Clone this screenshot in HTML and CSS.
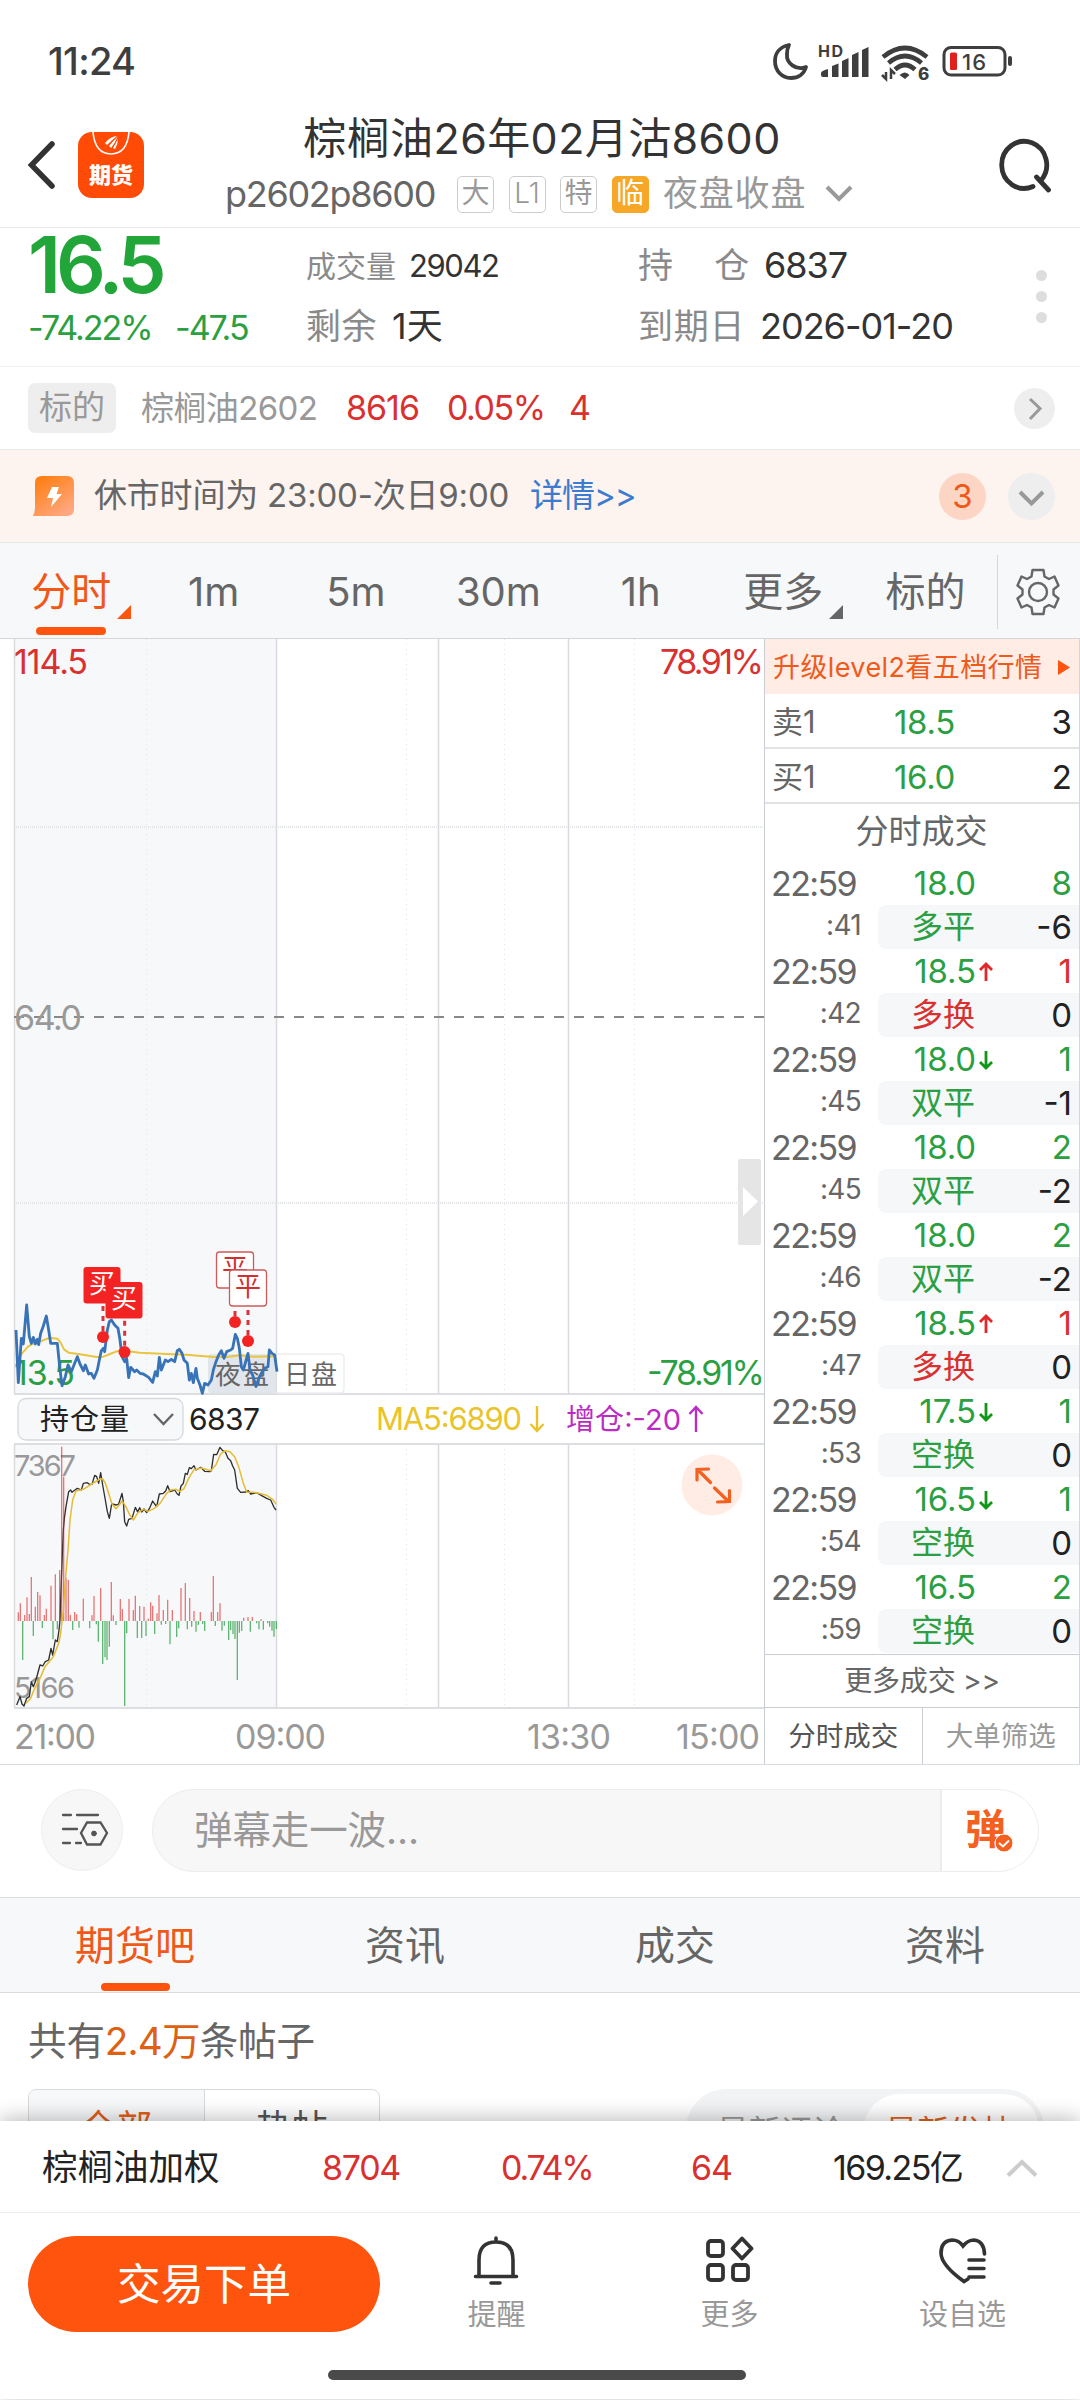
FILE: index.html
```html
<!DOCTYPE html>
<html lang="zh-CN">
<head>
<meta charset="utf-8">
<title>棕榈油26年02月沽8600</title>
<link rel="stylesheet" href="styles.css">
</head>
<body>
<div class="screen">
  <div class="statusbar">
    <span class="clock">11:24</span>
    <svg class="status-icons" width="246" height="44" viewBox="770 40 246 44">
      <path d="M789 45C779 47 775 54 775 61C775 71 782 78 791 78C798 78 804 74 806 67C796 71 786 63 787 54C787 50 788 47 789 45Z" fill="none" stroke="#3e3e3e" stroke-width="3.8" stroke-linejoin="round"/>
      <text x="818" y="57" font-size="16" font-weight="700" textLength="25" fill="#3e3e3e">HD</text>
      <path d="M821 73Q821 71 828 69V77H823Q821 77 821 75ZM832 66L838.5 63.500V77H832ZM842 61L848.500 58V77H842ZM852 55L858.500 52V77H852ZM862 50L868.500 47V77H862Z" fill="#3e3e3e"/>
      <g fill="none" stroke="#3e3e3e" stroke-width="4.600">
        <path d="M883 57Q905 39 927 57"/><path d="M888.500 63Q905 49 921.500 63"/><path d="M895 69.500Q905 60.500 915 69.500"/>
      </g>
      <path d="M899.500 75Q905 70 909.500 75L905 79Z" fill="#3e3e3e"/>
      <path d="M886 72V79L882 75M891 79V70L895 74" fill="none" stroke="#3e3e3e" stroke-width="2.500"/>
      <text x="918" y="80" font-size="17" font-weight="800" fill="#3e3e3e">6</text>
      <rect x="944" y="47.500" width="61" height="27.500" rx="7" fill="#fff" stroke="#3e3e3e" stroke-width="3"/>
      <rect x="1008" y="56" width="4" height="10" rx="2" fill="#3e3e3e"/>
      <rect x="950" y="52.500" width="7" height="17.500" rx="1.500" fill="#e01f1f"/>
      <text x="962" y="70" font-size="22" font-weight="500" textLength="24" fill="#3e3e3e">16</text>
    </svg>
  </div>

  <header class="header">
    <svg class="back" width="30" height="50" viewBox="0 0 30 50"><path d="M26 4L5.500 25L26 46" fill="none" stroke="#333" stroke-width="5.500" stroke-linecap="round" stroke-linejoin="miter"/></svg>
    <div class="logo">
      <svg width="66" height="26" viewBox="0 0 66 26"><path d="M15 0Q17 22 33 22Q49 22 51 0" fill="none" stroke="#fff" stroke-width="1.600"/><path d="M27 11Q33 4 39 4Q34 8 29 13ZM31 14Q36 8 39.500 5Q37 11 33 16ZM35 16Q38 11 40 7Q40 12 37 17Z" fill="#fff"/></svg>
      <span>期货</span>
    </div>
    <div class="title-block">
      <h1>棕榈油26年02月沽8600</h1>
      <div class="subtitle">
        <span class="code">p2602p8600</span>
        <span class="tag">大</span><span class="tag tag-l1">L1</span><span class="tag">特</span><span class="tag tag-hot">临</span>
        <span class="session">夜盘收盘</span>
        <svg width="28" height="18" viewBox="0 0 28 18"><path d="M2 2L14 14L26 2" fill="none" stroke="#999" stroke-width="4"/></svg>
      </div>
    </div>
    <svg class="search" width="56" height="56" viewBox="0 0 56 56"><path d="M35 48.500A22.500 23.500 0 1 1 43 42.500M38.500 39L50.500 52" fill="none" stroke="#333" stroke-width="4.800" stroke-linecap="round"/></svg>
  </header>

  <section class="quote">
    <div class="quote-price">
      <strong>16.5</strong>
      <div class="chg"><span>-74.22%</span><span>-47.5</span></div>
    </div>
    <div class="quote-col c1">
      <div class="sm"><i>成交量</i><b>29042</b></div>
      <div><i>剩余</i><b>1天</b></div>
    </div>
    <div class="quote-col c2">
      <div><i class="spread"><u>持</u><u>仓</u></i><b>6837</b></div>
      <div><i>到期日</i><b>2026-01-20</b></div>
    </div>
    <div class="dots"><s></s><s></s><s></s></div>
  </section>

  <section class="underlying">
    <span class="chip">标的</span>
    <span class="u-name">棕榈油2602</span>
    <span class="u-price">8616</span><span class="u-pct">0.05%</span><span class="u-diff">4</span>
    <svg class="push" width="41" height="41" viewBox="0 0 41 41"><circle cx="20.500" cy="20.500" r="20.500" fill="#eee"/><path d="M16 11L26 20.500L16 31" fill="none" stroke="#999" stroke-width="3"/></svg>
  </section>

  <section class="notice">
    <svg width="42" height="40" viewBox="0 0 42 40"><defs><linearGradient id="nt" x1="0" y1="0" x2=".7" y2="1"><stop offset="0" stop-color="#ff7a05"/><stop offset="1" stop-color="#ffa780"/></linearGradient></defs><path d="M2 7Q2 0 9 0H34Q41 0 41 7V33Q41 40 34 40H0Q2 36 2 32Z" fill="url(#nt)"/><path d="M19 11H26L23.500 18H29L18 31L20 22H14Z" fill="#fff"/></svg>
    <span class="n-text">休市时间为 23:00-次日9:00</span>
    <span class="n-link">详情&gt;&gt;</span>
    <span class="n-count">3</span>
    <svg width="47" height="47" viewBox="0 0 47 47"><circle cx="23.500" cy="23.500" r="23.500" fill="#eee"/><path d="M12 19L23.500 30.500L35 19" fill="none" stroke="#999" stroke-width="4"/></svg>
  </section>

  <nav class="periods">
    <span class="p on">分时<em></em></span>
    <span class="p">1m</span>
    <span class="p">5m</span>
    <span class="p">30m</span>
    <span class="p">1h</span>
    <span class="p">更多<em></em></span>
    <span class="p">标的</span>
    <span class="gear"><svg width="44" height="48" viewBox="-22 -24 44 48"><path d="M-5.500 -22H5.500L6.500 -15.500L11 -13L16.500 -15.500L20.500 -6.500L15.500 -2.500V2.500L20.500 6.500L16.500 15.500L11 13L6.500 15.500L5.500 22H-5.500L-6.500 15.500L-11 13L-16.500 15.500L-20.500 6.500L-15.500 2.500V-2.500L-20.500 -6.500L-16.500 -15.500L-11 -13L-6.500 -15.500Z" fill="none" stroke="#666" stroke-width="2.400" stroke-linejoin="round"/><circle r="9" fill="none" stroke="#666" stroke-width="2.400"/></svg></span>
  </nav>

  <main class="market">
    <svg class="chart" width="764" height="1125" viewBox="0 639 764 1125">
      <rect x="14" y="639" width="263" height="755" fill="#f7f8fa"/>
      <rect x="14" y="1444" width="263" height="264" fill="#f7f8fa"/>
      <g stroke="#e2e3e6" stroke-width="1" stroke-dasharray="1 4">
        <path d="M146.500 639V1394M406.500 639V1394M504.500 639V1394M634.500 639V1394M146.500 1444V1708M406.500 1444V1708M504.500 1444V1708M634.500 1444V1708"/>
      </g>
      <path d="M14 827H763M14 1203H763" stroke="#e4e5e8" stroke-width="2" stroke-dasharray="1 1"/>
      <path d="M14.500 639V1394M14.500 1444V1708M276.500 639V1394M276.500 1444V1708M438.500 639V1394M438.500 1444V1708M568.500 639V1394M568.500 1444V1708" stroke="#d9dadd" stroke-width="1.500" fill="none"/>
      <path d="M14 1394H764M14 1444H764M14 1708H764" stroke="#dcdee1" stroke-width="2"/>
      <path d="M14 1017H764" stroke="#888" stroke-width="2" stroke-dasharray="10 10"/>

      <rect x="208" y="1354" width="68" height="39" rx="3" fill="#e1e5ec"/>
      <path d="M277 1354H340Q344 1354 344 1358V1389Q344 1393 340 1393H277" fill="#fff" stroke="#eceef0" stroke-width="1.500"/>
      <g font-size="26" fill="#666"><text x="215" y="1384" textLength="54">夜盘</text><text x="284" y="1384" textLength="53">日盘</text></g>
      <g font-size="34">
        <text x="14" y="674" textLength="74" fill="#d93030">114.5</text>
        <text x="660" y="674" textLength="104" fill="#d93030">78.91%</text>
        <text x="14" y="1030" textLength="68" fill="#999">64.0</text>
        <text x="14" y="1385" textLength="61" fill="#2c9f43">13.5</text>
        <text x="647" y="1385" textLength="118" fill="#2c9f43">-78.91%</text>
      </g>

      <g transform="translate(0 1220) scale(.33333)" fill="none" stroke-linejoin="round">
        <path stroke="#e9c53f" stroke-width="6" d="M55 420L66 400L84 380L104 368L124 363L150 353L172 356L182 368L192 388L206 398L240 403L290 411L310 410L330 402L350 394L372 392L420 398L500 402L560 404L640 411L680 411L720 406L760 410L828 409"/>
        <path stroke="#3873b8" stroke-width="8.500" d="M48 330L55 488L64 355L70 372L80 255L88 350L94 370L100 352L106 372L112 358L116 374L122 340L130 318L139 288L146 330L152 370H172L178 430L186 497L196 470L204 435L214 455L224 430L232 410L240 432L250 452L256 435L266 462L274 460L282 475L292 450L298 420L304 392L310 385L314 395L322 330L328 305L334 300L344 315L354 325L360 360L366 410L374 425L380 415L386 473L392 442L404 455L410 450L420 460L430 462L446 472L458 487L466 455L472 468L478 412L484 450L496 420L504 425L514 418L524 425L532 392L538 388L546 400L552 420L562 430L568 480L574 460L580 488L588 445L592 475L600 495L607 520L614 490L624 495L634 480L640 450L648 425L656 405L664 392L672 415L680 395L692 390L698 385L706 343L712 355L718 385L724 440L730 450L744 400L750 450L758 465L768 500L776 475L784 460L794 445L804 440L808 390L816 400L824 405L831 455"/>
        <path stroke="#d8323a" stroke-width="9" stroke-dasharray="15 15" d="M309 258V340M374 302V385M705 273V300M744 270V350"/>
      </g>
      <g fill="#f42323">
        <circle cx="103" cy="1337" r="6"/><circle cx="124.500" cy="1352" r="6"/><circle cx="235" cy="1322" r="6"/><circle cx="248" cy="1341" r="6"/>
        <rect x="83.500" y="1267" width="37" height="36.500" rx="3"/>
        <text x="89" y="1293" font-size="26" fill="#fff">买</text>
        <rect x="105.500" y="1282" width="37" height="36.500" rx="3"/>
        <text x="111" y="1308" font-size="26" fill="#fff">买</text>
        <g fill="#fff" stroke="#cf5a5a" stroke-width="1.300"><rect x="216.500" y="1252" width="37" height="36" rx="3"/></g>
        <text x="222" y="1278" font-size="26" fill="#cf3030">平</text>
        <g fill="#fff" stroke="#cf5a5a" stroke-width="1.300"><rect x="229.500" y="1270" width="37" height="36" rx="3"/></g>
        <text x="235" y="1296" font-size="26" fill="#cf3030">平</text>
      </g>

      <rect x="738" y="1159" width="23" height="86" rx="2" fill="#e5e5e5"/><path d="M743 1187V1216L758 1201.500Z" fill="#fff"/>

      <rect x="18" y="1398.500" width="165" height="41.500" rx="8" fill="#f7f8fa" stroke="#d5d8dd" stroke-width="1.300"/>
      <text x="40" y="1430" font-size="29" textLength="89" fill="#222">持仓量</text>
      <path d="M154 1414L163.500 1424L173 1414" fill="none" stroke="#666" stroke-width="2.400"/>
      <text x="189" y="1430" font-size="30" textLength="71" fill="#222">6837</text>
      <text x="376" y="1430" font-size="31" textLength="146" fill="#eac32a">MA5:6890</text>
      <path d="M537 1406V1431M530.500 1424L537 1431L543.500 1424" fill="none" stroke="#eac32a" stroke-width="2.400"/>
      <text x="566" y="1430" font-size="29" textLength="115" fill="#bb2cc3">增仓:-20</text>
      <path d="M696 1432V1407M689.500 1414L696 1407L702.500 1414" fill="none" stroke="#bb2cc3" stroke-width="2.400"/>

      <g font-size="29" fill="#999"><text x="14" y="1476" textLength="62">7367</text><text x="14" y="1698" textLength="61">5166</text></g>
      <g transform="translate(0 1430) scale(.33333)" fill="none">
        <path stroke="#2e2e2e" stroke-width="4" stroke-linejoin="round" d="M50 825L60 800L66 822L72 828L80 805L88 800L94 755L100 770L106 755L112 735L120 705L128 708L136 695L146 690L153 655L158 675L166 630L172 635L177 600L180 570L184 450L190 300L193 265L198 230L206 185L212 180L216 187L232 175L244 180L250 160L262 158L268 163H276L284 136L290 140L296 160L302 128L308 165L316 210L322 245L328 265L335 222L350 225L356 222L366 190L370 215L374 275L380 288L386 268L396 265L406 232L413 246L419 233L425 246L432 237L440 248L448 236L458 213L464 222L470 230L478 192L490 190L497 183L503 167L510 185L524 180L532 192L537 196L543 168L550 160L556 130L562 133L568 113L574 116L582 107L588 120L602 112L614 124L630 125L634 122L641 73L650 74L660 52L668 62L676 66L684 85L692 92L698 108L704 120L712 175L722 187L738 186L745 182L752 192L770 188L785 197L800 205L812 210L822 232L828 240"/>
        <path stroke="#d22" stroke-opacity=".6" stroke-width="4" d="M55 573V547M61 573V520M74 573V555M81 573V502M88 573V552M94 573V441M106 573V530M113 573V486M120 573V496M133 573V555M139 573V536M153 573V467M166 573V433M179 573V420M185 573V50M191 573V140M198 573V444M205 573V450M211 573V555M224 573V546M230 573V553M250 573V506M276 573V556M282 573V498M302 573V474M334 573V456M340 573V556M361 573V507M367 573V537M387 573V507M400 573V540M406 573V497M419 573V528M432 573V530M445 573V566M452 573V517M458 573V527M471 573V550M477 573V495M490 573V540M503 573V509M517 573V540M543 573V474M556 573V459M569 573V504M582 573V543M601 573V546M634 573V546M640 573V438M653 573V546M660 573V520M731 573V563M744 573V561M757 573V561M783 573V568"/>
        <path stroke="#1f9a3a" stroke-opacity=".7" stroke-width="4" d="M68 573V690M100 573V618M127 573V594M159 573V628M172 573V598M218 573V600M237 573V593M269 573V595M289 573V583M295 573V635M308 573V702M315 573V682M321 573V690M328 573V650M348 573V585M374 573V828M380 573V610M412 573V624M425 573V624M438 573V618M464 573V612M484 573V584M497 573V582M510 573V643M530 573V621M536 573V595M562 573V598M575 573V590M588 573V605M595 573V585M608 573V582M614 573V603M646 573V588M666 573V602M673 573V587M686 573V630M692 573V600M699 573V612M705 573V627M712 573V750M718 573V608M725 573V603M751 573V605M770 573V580M777 573V598M790 573V599M803 573V580M809 573V590M816 573V602M822 573V620M829 573V597"/>
        <path stroke="#e6bb33" stroke-width="4.500" stroke-linejoin="round" d="M78 820L92 805L104 775L120 745L135 710L160 680L176 640L182 610L190 540L196 450L204 360L210 270L218 210L228 183L250 178L275 162L300 147L308 146L316 160L326 190L336 222L348 236L358 225L366 213L376 227L388 252L400 270L414 248L430 238L444 244L462 236L480 220L500 190L512 180L528 178L540 184L552 176L566 145L582 119L604 114L632 122L648 104L662 72L676 62L690 65L704 80L716 110L730 160L740 186L770 188L800 196L818 208L828 222"/>
      </g>
      <circle cx="712" cy="1485" r="30.500" fill="#ffece5"/>
      <path d="M710.500 1482.500L698 1470M697 1480V1469.500L708.500 1469M714.500 1488L728 1501M729.500 1490.500V1501.500L717.500 1502" fill="none" stroke="#f4601f" stroke-width="3.200" stroke-linecap="round"/>
      <g font-size="34" fill="#999"><text x="14" y="1749" textLength="82">21:00</text><text x="235" y="1749" textLength="91">09:00</text><text x="527" y="1749" textLength="84">13:30</text><text x="676" y="1749" textLength="84">15:00</text></g>
    </svg>

    <aside class="book">
      <div class="level2"><span>升级level2看五档行情</span><svg width="12" height="15" viewBox="0 0 12 15"><path d="M0 0V15L12 7.500Z" fill="#ff5310"/></svg></div>
      <div class="depth"><i>卖1</i><span class="g">18.5</span><b>3</b></div>
      <div class="depth"><i>买1</i><span class="g">16.0</span><b>2</b></div>
      <div class="book-title">分时成交</div>
      <div class="ticks" id="ticks"></div>
      <div class="more">更多成交 &gt;&gt;</div>
      <div class="book-tabs"><span>分时成交</span><span>大单筛选</span></div>
    </aside>
  </main>

  <section class="danmu">
    <div class="dm-set"><svg width="48" height="36" viewBox="0 0 48 36" fill="none" stroke="#555" stroke-width="2.300" stroke-linecap="round"><path d="M2 3H10M16 3H37M2 17H16M2 31H9M15 31H20M20 21L26 10.500H39.500L46 21L39.500 32.500H26Z"/><circle cx="33" cy="21.500" r="2.400" fill="#555" stroke-width="1"/></svg></div>
    <div class="dm-box"><span class="dm-ph">弹幕走一波...</span><span class="dm-btn">弹<svg width="20" height="20" viewBox="0 0 20 20"><circle cx="10" cy="10" r="9" fill="#f4601f" stroke="#fff"/><path d="M5 10L9 13.500L15 7.500" fill="none" stroke="#fff" stroke-width="2"/></svg></span></div>
  </section>

  <nav class="info-tabs"><span class="on">期货吧</span><span>资讯</span><span>成交</span><span>资料</span></nav>

  <section class="posts">
    <div class="count">共有<b>2.4万</b>条帖子</div>
    <div class="filters">
      <div class="seg"><span class="on">全部</span><span>热帖</span></div>
      <div class="sort"><span>最新评论</span><span class="on">最新发帖</span></div>
    </div>
  </section>

  <footer class="bottom">
    <div class="index-row"><span class="ix-name">棕榈油加权</span><span class="r ix-p">8704</span><span class="r ix-c">0.74%</span><span class="r ix-d">64</span><span class="ix-v">169.25亿</span><svg width="32" height="20" viewBox="0 0 32 20"><path d="M2 17.500L16 4L30 17.500" fill="none" stroke="#ccc" stroke-width="4"/></svg></div>
    <div class="actions">
      <button class="trade">交易下单</button>
      <div class="act"><svg width="48" height="50" viewBox="0 0 48 50" fill="none" stroke="#333" stroke-width="3.600" stroke-linecap="round"><path d="M24 2V5M7 40V24Q7 6 24 6Q41 6 41 24V40M3.500 40.500H44.500M19 47H28"/></svg><span>提醒</span></div>
      <div class="act"><svg width="50" height="50" viewBox="0 0 50 50" fill="none" stroke="#333" stroke-width="3.800" stroke-linejoin="round"><rect x="4" y="5" width="15" height="15" rx="3"/><rect x="4" y="29" width="15" height="15" rx="3"/><rect x="29" y="29" width="15" height="15" rx="3"/><path d="M38 2.500L47.500 12.500L38 22.500L28.500 12.500Z"/></svg><span>更多</span></div>
      <div class="act"><svg width="50" height="50" viewBox="0 0 50 50" fill="none" stroke="#333" stroke-width="3.600" stroke-linecap="round"><path d="M31 43L27 45.500Q4 29 4 17Q4 5 15 4Q22 4 26 10Q31 4 37 4Q47 5 47.500 18M32 24H47M32 32.500H47M32 41H47"/></svg><span>设自选</span></div>
    </div>
    <div class="home"></div>
  </footer>
</div>
<script src="ticks.js"></script>
</body>
</html>
```
FILE: ticks.js
```js
const ticks = [
  ["41", "18.0", "", 8, "g", "多平", "g", "-6"],
  ["42", "18.5", "up", 1, "r", "多换", "r", "0"],
  ["45", "18.0", "down", 1, "g", "双平", "g", "-1"],
  ["45", "18.0", "", 2, "g", "双平", "g", "-2"],
  ["46", "18.0", "", 2, "g", "双平", "g", "-2"],
  ["47", "18.5", "up", 1, "r", "多换", "r", "0"],
  ["53", "17.5", "down", 1, "g", "空换", "g", "0"],
  ["54", "16.5", "down", 1, "g", "空换", "g", "0"],
  ["59", "16.5", "", 2, "g", "空换", "g", "0"]
];
const arrows = {
  "": "",
  up: '<path d="M7 19V2M1 8L7 2L13 8" stroke="#e02828"/>',
  down: '<path d="M7 1V18M1 12L7 18L13 12" stroke="#109618"/>'
};
document.getElementById("ticks").innerHTML = ticks.map(t => `
  <div class="tick">
    <div class="t1"><i>22:59</i><span class="g">${t[1]}</span><svg width="14" height="20" viewBox="0 0 14 20" fill="none" stroke-width="2.800">${arrows[t[2]]}</svg><b class="${t[4]}">${t[3]}</b></div>
    <div class="t2"><i>:${t[0]}</i><div class="pill"><span class="${t[6]}">${t[5]}</span><b>${t[7]}</b></div></div>
  </div>`).join("");
```
FILE: styles.css
```css
* { box-sizing: border-box; margin: 0; padding: 0; }
html, body { width: 1080px; height: 2400px; overflow: hidden; background: #fff; }
body { font-family: Inter, "Noto Sans CJK SC", sans-serif; color: #333; }
i, u, s, em { font-style: normal; text-decoration: none; }
b { font-weight: 400; }
svg { display: block; flex: none; }
text { font-family: Inter, "Noto Sans CJK SC", sans-serif; }
.g { color: #2c9f43; }
.r { color: #d93030; }
.screen { width: 1080px; height: 2400px; display: flex; flex-direction: column; position: relative; white-space: nowrap; }
.screen > * { flex: none; }

.statusbar { height: 112px; display: flex; justify-content: space-between; padding: 39px 64px 0 48px; }
.clock { font-size: 38px; line-height: 45px; font-weight: 500; color: #3e3e3e; letter-spacing: -.7px; }
.status-icons { margin-top: 1px; }

.header { height: 116px; border-bottom: 1px solid #e8e8e8; display: flex; position: relative; padding-left: 26px; }
.back { margin-top: 28px; }
.logo { width: 66px; height: 66px; margin: 20px 0 0 22px; border-radius: 14px; background: #ff4b06; color: #fff; text-align: center; }
.logo span { display: block; font-size: 22px; line-height: 34px; font-weight: 900; }
.title-block { width: 634px; margin-left: 81px; display: flex; flex-direction: column; align-items: center; }
h1 { font-size: 43px; font-weight: 400; line-height: 53px; letter-spacing: .4px; }
.subtitle { display: flex; align-items: center; height: 44px; margin-top: 7px; width: 100%; }
.code { font-size: 36px; width: 232px; letter-spacing: -1.3px; color: #666; }
.tag { width: 37px; height: 37px; border: 1.5px solid #ccc; border-radius: 5px; font-size: 28px; line-height: 33px; color: #999; text-align: center; margin-right: 14.500px; flex: none; }
.tag-l1 { font-weight: 300; }
.tag-hot { background: #f6a728; border-color: #f6a728; color: #fff; }
.session { font-size: 35px; line-height: 40px; color: #999; width: 162px; letter-spacing: .8px; position: relative; top: -1px; }
.search { position: absolute; left: 998px; top: 26px; }

.quote { height: 139px; border-bottom: 1px solid #f2f2f2; display: flex; }
.quote-price { width: 306px; padding-left: 28px; }
.quote-price strong { display: block; font-size: 78px; line-height: 74px; font-weight: 600; color: #22a63a; letter-spacing: -5px; }
.chg { display: flex; font-size: 34px; line-height: 40px; margin-top: 6px; color: #2c9f43; letter-spacing: -2px; }
.chg span:first-child { width: 147px; }
.quote-col { padding-top: 12px; font-size: 36px; }
.quote-col > div { display: flex; height: 50px; align-items: center; margin-bottom: 11px; }
.quote-col i { color: #8a8a8a; font-size: 35px; line-height: 50px; }
.quote-col b { line-height: 50px; }
.c1 { width: 332px; }
.c1 i { width: 86px; letter-spacing: .6px; }
.quote-col .sm { padding-top: 2px; }
.quote-col .sm i { font-size: 30px; width: 103px; letter-spacing: 0; }
.quote-col .sm b { font-size: 31px; letter-spacing: -1.4px; }
.c2 { width: 394px; }
.c2 i { width: 122px; letter-spacing: .8px; }
.c2 .spread { display: flex; justify-content: space-between; width: 126px; padding-right: 14px; }
.c2 b { letter-spacing: -1px; }
.dots { padding-top: 42px; }
.dots s { display: block; width: 11px; height: 11px; border-radius: 50%; background: #ddd; margin: 0 0 10px 4px; }

.underlying { height: 83px; border-bottom: 1px solid #e8e8e8; display: flex; align-items: center; padding-left: 28px; font-size: 34px; line-height: 50px; color: #d93030; letter-spacing: -1.500px; }
.chip { width: 88px; height: 50px; border-radius: 7px; background: #eee; color: #999; font-size: 33px; line-height: 49px; text-align: center; letter-spacing: 0; }
.u-name { width: 205px; margin-left: 25px; color: #999; font-size: 33px; letter-spacing: -.6px; }
.u-price { width: 101px; letter-spacing: -1px; }
.u-pct { width: 122px; }
.u-diff { width: 445px; }

.notice { height: 93px; border-bottom: 1px solid #e8e8e8; background: #fdf3ef; display: flex; align-items: center; padding-left: 33px; font-size: 33px; line-height: 44px; }
.n-text { width: 436px; margin-left: 19px; color: #666; letter-spacing: -.2px; padding-bottom: 2px; }
.n-link { width: 409px; color: #3b7bd0; letter-spacing: -1px; padding-bottom: 2px; }
.n-count { width: 47px; height: 47px; border-radius: 50%; background: #fdd5c4; color: #f0581a; text-align: center; line-height: 47px; margin-right: 22px; }

.periods { height: 96px; border-bottom: 1px solid #d4d6da; background: #f7f8fa; display: flex; font-size: 40px; color: #666; }
.p { width: 142.400px; text-align: center; line-height: 98px; position: relative; flex: none; }
.p em { position: absolute; right: 11px; top: 62px; border-left: 14px solid transparent; border-bottom: 14px solid #666; }
.p.on { color: #f0581a; }
.p.on em { border-bottom-color: #ff540e; }
.p.on::after { content: ""; position: absolute; left: 36px; bottom: 3px; width: 70px; height: 8px; border-radius: 4px; background: #ff540e; }
.gear { width: 82px; height: 74px; margin-top: 12px; border-left: 1.5px solid #d4d6da; display: flex; align-items: center; justify-content: center; }

.market { height: 1126px; border-bottom: 1.5px solid #dadde0; display: flex; }
.book { width: 316px; border-left: 1.5px solid #c9ccd0; border-right: 1px solid #d4d6da; display: flex; flex-direction: column; }
.book > div { flex: none; }
.level2 { height: 55px; background: #ffece4; display: flex; align-items: center; padding: 2px 0 0 8px; color: #ee5a1c; font-size: 27px; letter-spacing: .4px; line-height: 40px; }
.level2 span { width: 285px; }
.depth { height: 55px; border-bottom: 2px solid #e1e3e7; display: flex; align-items: center; padding: 2px 7px 0; font-size: 33px; line-height: 44px; }
.depth i { width: 122px; color: #666; font-size: 31px; }
.depth span { letter-spacing: -.3px; flex: 1; }
.depth b { color: #222; }
.book-title { height: 54px; line-height: 54px; text-align: center; font-size: 33px; color: #666; padding-right: 1px; }
.ticks { height: 796px; padding-top: 4px; }
.tick { height: 88px; color: #222; font-size: 33px; }
.t1 { height: 43px; line-height: 43px; display: flex; padding: 0 7px 0 6px; }
.t1 i { width: 90px; color: #666; font-size: 34px; letter-spacing: -1.600px; }
.t1 span { width: 115px; text-align: right; letter-spacing: -.1px; }
.t1 svg { margin: 12px 0 0 3px; }
.t1 b { flex: 1; text-align: right; }
.t2 { display: flex; height: 45px; }
.t2 i { width: 96px; text-align: right; color: #666; font-size: 28px; line-height: 41px; letter-spacing: -.7px; }
.pill { margin-left: 17px; flex: 1; height: 44px; line-height: 44px; background: #f5f7f9; border-radius: 8px 0 0 8px; display: flex; justify-content: space-between; padding: 0 7px 0 33px; }
.pill span { font-size: 32px; }
.more { height: 54px; line-height: 52px; border-top: 1.500px solid #c9ccd0; border-bottom: 1.500px solid #c9ccd0; text-align: center; font-size: 28px; color: #666; letter-spacing: -.2px; }
.book-tabs { height: 56px; display: flex; font-size: 27.500px; line-height: 56px; text-align: center; color: #555; }
.book-tabs span { flex: 1; }
.book-tabs span + span { border-left: 1.500px solid #c9ccd0; color: #999; }

.danmu { height: 132px; display: flex; padding: 24px 0 0 41px; }
.dm-set { width: 82px; height: 82px; border-radius: 50%; background: #f7f7f7; border: 1.500px solid #eee; display: flex; align-items: center; justify-content: center; padding-left: 5px; }
.dm-box { width: 887px; height: 83px; margin-left: 29px; border: 1.500px solid #ececec; border-radius: 42px; background: #f7f7f7; overflow: hidden; display: flex; }
.dm-ph { flex: 1; padding-left: 41px; font-size: 38.500px; line-height: 80px; color: #999; letter-spacing: -.1px; }
.dm-btn { width: 98px; border-left: 2px solid #ececec; background: #fff; color: #f4601f; font-size: 41px; font-weight: 700; line-height: 78px; padding-left: 23px; position: relative; }
.dm-btn svg { position: absolute; left: 52px; top: 43px; }

.info-tabs { height: 96px; background: #f7f8fa; border-top: 1px solid #dadde0; border-bottom: 1px solid #dadde0; display: grid; grid-template-columns: repeat(4, 1fr); text-align: center; font-size: 40px; line-height: 96px; color: #666; }
.info-tabs span { position: relative; height: 94px; }
.info-tabs .on { color: #f0581a; }
.info-tabs .on::after { content: ""; position: absolute; left: 101px; bottom: 1px; width: 69px; height: 8px; border-radius: 4px; background: #ff540e; }

.posts { height: 128px; padding: 0 28px; overflow: hidden; }
.count { height: 96px; line-height: 96px; font-size: 38.600px; color: #666; letter-spacing: -.2px; }
.count b { color: #dd6114; letter-spacing: -.8px; }
.filters { display: flex; justify-content: space-between; padding-right: 8px; }
.seg { width: 352px; height: 74px; border: 1.500px solid #d8dade; border-radius: 8px; display: flex; overflow: hidden; font-size: 36px; line-height: 76px; text-align: center; color: #555; }
.seg span { flex: 1; }
.seg .on { background: #f7f8fa; border-right: 1.500px solid #d8dade; color: #e0601a; }
.sort { width: 358px; height: 80px; border-radius: 40px; background: #f2f3f5; display: flex; padding: 5px; font-size: 32px; line-height: 75px; text-align: center; color: #999; }
.sort span { flex: 1; padding-left: 4px; }
.sort .on { background: #fff; border-radius: 36px; color: #e0601a; padding: 0 4px 0 0; margin-left: -3px; }

.bottom { height: 278px; background: #fff; position: relative; box-shadow: 0 -2px 20px rgba(0,0,0,.28); }
.index-row { height: 92px; border-bottom: 1px solid #ececec; display: flex; align-items: center; padding: 2px 0 0 42px; font-size: 34px; line-height: 44px; color: #222; }
.ix-name { width: 280px; font-size: 35.500px; }
.ix-p { width: 179px; letter-spacing: -1.300px; }
.ix-c { width: 190px; letter-spacing: -2.200px; }
.ix-d { width: 142px; letter-spacing: -1px; }
.ix-v { width: 173px; letter-spacing: -1.600px; }
.actions { display: flex; padding: 23px 0 0 28px; }
.trade { width: 352px; height: 96px; border: 0; border-radius: 48px; background: #ff540e; color: #fff; font: 400 43.500px/92px Inter, "Noto Sans CJK SC", sans-serif; }
.act { width: 233px; display: flex; flex-direction: column; align-items: center; font-size: 29px; color: #999; line-height: 44px; }
.act svg { margin-left: -2px; }
.act span { margin-top: 7px; }
.home { position: absolute; left: 328px; bottom: 19px; width: 418px; height: 10px; border-radius: 5px; background: #4a4a4a; }
```
